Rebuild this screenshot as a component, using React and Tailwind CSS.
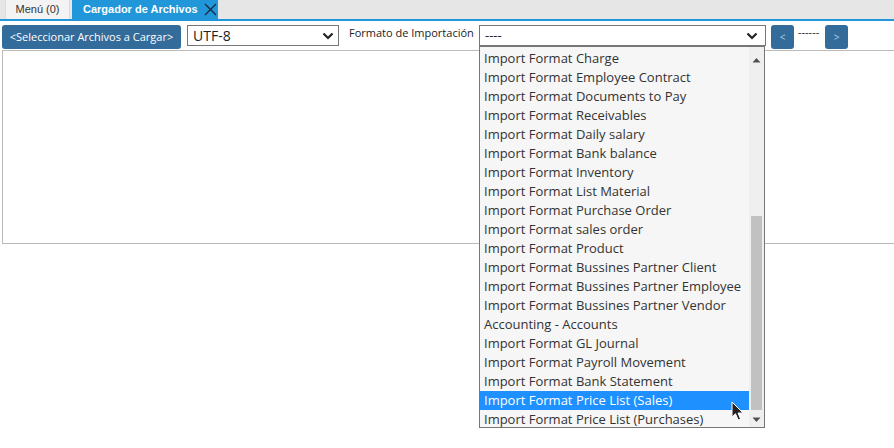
import React from "react";

const items = [
  "Import Format Charge",
  "Import Format Employee Contract",
  "Import Format Documents to Pay",
  "Import Format Receivables",
  "Import Format Daily salary",
  "Import Format Bank balance",
  "Import Format Inventory",
  "Import Format List Material",
  "Import Format Purchase Order",
  "Import Format sales order",
  "Import Format Product",
  "Import Format Bussines Partner Client",
  "Import Format Bussines Partner Employee",
  "Import Format Bussines Partner Vendor",
  "Accounting - Accounts",
  "Import Format GL Journal",
  "Import Format Payroll Movement",
  "Import Format Bank Statement",
  "Import Format Price List (Sales)",
  "Import Format Price List (Purchases)",
];

function Chevron() {
  return (
    <svg width="12" height="8" viewBox="0 0 12 8" className="shrink-0">
      <path d="M1.5 1.5 L6 6 L10.5 1.5" fill="none" stroke="#222" strokeWidth="2.2" />
    </svg>
  );
}

export default function App() {
  const sans = { fontFamily: '"Open Sans", "Noto Sans", sans-serif' };
  return (
    <div className="relative w-[894px] h-[448px] overflow-hidden bg-white" style={sans}>
      {/* Tab bar */}
      <div
        className="flex h-[21px] items-stretch bg-[#e6e6e6] border-b-2 border-[#2196d9] pl-[5px] gap-[2px]"
        style={{ fontFamily: '"Liberation Sans", Arial, sans-serif' }}
      >
        <div className="flex w-[65px] items-center justify-center bg-[#f3f3f3] border-l border-r border-[#dcdcdc] text-[11px] text-[#333]">
          Menú (0)
        </div>
        <div className="flex w-[146px] items-center bg-[#2196d9] pl-[11px] text-[11px] font-bold text-white">
          <span>Cargador de Archivos</span>
          <svg width="13" height="13" viewBox="0 0 13 13" className="ml-[6px]">
            <path d="M1 1 L12 12 M12 1 L1 12" stroke="#1b2a3a" strokeWidth="1.3" />
          </svg>
        </div>
      </div>

      {/* Toolbar */}
      <div className="flex items-start pl-[2px] pt-[4px]">
        <button className="flex h-[24px] w-[179px] items-center justify-center rounded-[3px] bg-[#336b9b] text-[11px] text-white">
          &lt;Seleccionar Archivos a Cargar&gt;
        </button>
        <div className="ml-[6px] flex h-[21px] w-[152px] items-center justify-between border border-[#767676] bg-white pl-[5px] pr-[4px] text-[14px] text-[#222]">
          <span>UTF-8</span>
          <Chevron />
        </div>
        <div className="ml-[10px] mt-[1px] w-[126px] whitespace-nowrap text-[11px] leading-[14px] text-[#222]">
          Formato de Importación
        </div>
        <div className="ml-[4px] flex h-[21px] w-[287px] items-center justify-between border border-[#767676] bg-white pl-[5px] pr-[7px] text-[13px] text-[#222]">
          <span>----</span>
          <Chevron />
        </div>
        <button className="ml-[5px] flex h-[24px] w-[23px] items-center justify-center rounded-[3px] bg-[#336b9b] text-[10px] text-[#b9cde0]">
          &lt;
        </button>
        <div className="ml-[4px] w-[23px] text-[11px] leading-[14px] text-[#222]">------</div>
        <button className="ml-[4px] flex h-[24px] w-[23px] items-center justify-center rounded-[3px] bg-[#336b9b] text-[10px] text-[#b9cde0]">
          &gt;
        </button>
      </div>

      {/* Content panel */}
      <div className="ml-[2px] mt-[1px] h-[194px] w-[900px] border border-[#bbbbbb] bg-white" />

      {/* Open dropdown list */}
      <div className="absolute left-[479px] top-[46px] flex h-[382px] w-[286px] overflow-hidden border border-[#767676] bg-[#f6f6f6]">
        <div className="flex-1 pt-[2px]">
          {items.map((t, i) => (
            <div
              key={t}
              className={
                "h-[19px] pl-[4px] text-[13px] leading-[19px] whitespace-nowrap " +
                (i === 18 ? "bg-[#1e90ff] text-white" : "text-[#333]")
              }
            >
              {t}
            </div>
          ))}
        </div>
        <div className="relative w-[15px] bg-[#efefef]">
          <svg width="9" height="6" viewBox="0 0 9 6" className="absolute left-[3px] top-[10px]">
            <path d="M0.5 5.5 L4.5 1 L8.5 5.5 Z" fill="#505050" />
          </svg>
          <div className="absolute left-[2px] top-[169px] h-[194px] w-[11px] bg-[#c1c1c1]" />
          <svg width="9" height="6" viewBox="0 0 9 6" className="absolute left-[3px] top-[370px]">
            <path d="M0.5 0.5 L4.5 5 L8.5 0.5 Z" fill="#505050" />
          </svg>
        </div>
      </div>

      {/* Mouse cursor */}
      <svg width="14" height="21" viewBox="0 0 14 21" className="absolute left-[731px] top-[401px]">
        <path
          d="M1 1 L1 16 L4.5 12.8 L7.2 19 L9.6 18 L7 12 L12 12 Z"
          fill="#222"
          stroke="#fff"
          strokeWidth="1"
          strokeLinejoin="round"
        />
      </svg>
    </div>
  );
}
